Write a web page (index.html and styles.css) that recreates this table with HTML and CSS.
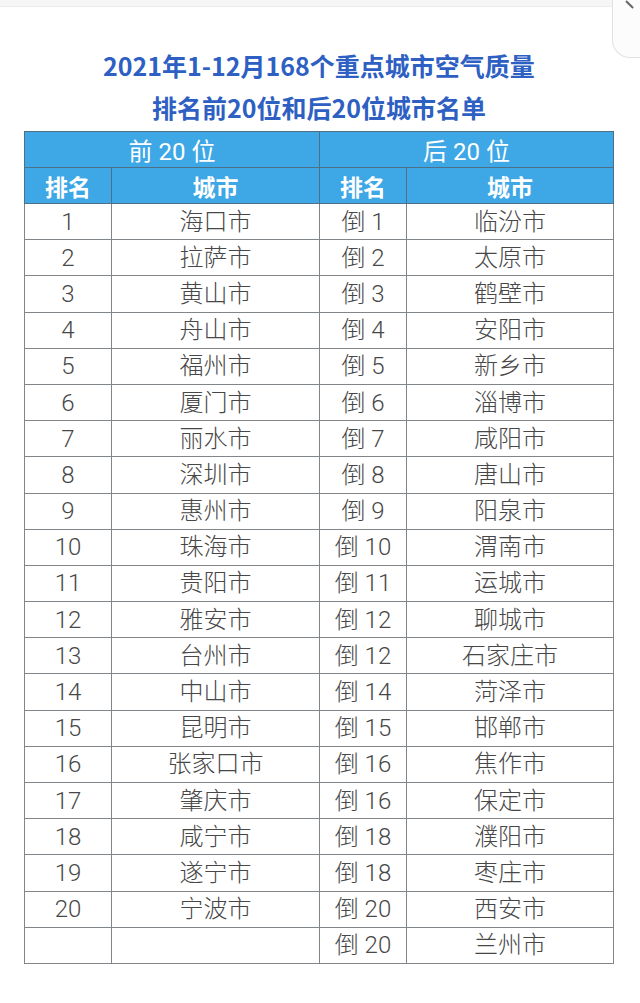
FILE: index.html
```html
<!DOCTYPE html>
<html lang="zh-CN">
<head>
<meta charset="utf-8">
<title>2021年1-12月168个重点城市空气质量排名</title>
<link rel="stylesheet" href="styles.css">
</head>
<body>
<div class="topbar"></div>
<div class="corner"><span class="corner-mark"></span></div>
<main class="page">
  <h1 class="title">
    <span class="line">2021年1-12月168个重点城市空气质量</span>
    <span class="line">排名前20位和后20位城市名单</span>
  </h1>
  <table class="rank">
    <colgroup>
      <col class="c-rank"><col class="c-city"><col class="c-rank"><col class="c-city2">
    </colgroup>
    <thead>
      <tr class="h1"><th colspan="2">前 20 位</th><th colspan="2">后 20 位</th></tr>
      <tr class="h2"><th>排名</th><th>城市</th><th>排名</th><th>城市</th></tr>
    </thead>
    <tbody>
      <tr><td>1</td><td>海口市</td><td>倒 1</td><td>临汾市</td></tr>
      <tr><td>2</td><td>拉萨市</td><td>倒 2</td><td>太原市</td></tr>
      <tr><td>3</td><td>黄山市</td><td>倒 3</td><td>鹤壁市</td></tr>
      <tr><td>4</td><td>舟山市</td><td>倒 4</td><td>安阳市</td></tr>
      <tr><td>5</td><td>福州市</td><td>倒 5</td><td>新乡市</td></tr>
      <tr><td>6</td><td>厦门市</td><td>倒 6</td><td>淄博市</td></tr>
      <tr><td>7</td><td>丽水市</td><td>倒 7</td><td>咸阳市</td></tr>
      <tr><td>8</td><td>深圳市</td><td>倒 8</td><td>唐山市</td></tr>
      <tr><td>9</td><td>惠州市</td><td>倒 9</td><td>阳泉市</td></tr>
      <tr><td>10</td><td>珠海市</td><td>倒 10</td><td>渭南市</td></tr>
      <tr><td>11</td><td>贵阳市</td><td>倒 11</td><td>运城市</td></tr>
      <tr><td>12</td><td>雅安市</td><td>倒 12</td><td>聊城市</td></tr>
      <tr><td>13</td><td>台州市</td><td>倒 12</td><td>石家庄市</td></tr>
      <tr><td>14</td><td>中山市</td><td>倒 14</td><td>菏泽市</td></tr>
      <tr><td>15</td><td>昆明市</td><td>倒 15</td><td>邯郸市</td></tr>
      <tr><td>16</td><td>张家口市</td><td>倒 16</td><td>焦作市</td></tr>
      <tr><td>17</td><td>肇庆市</td><td>倒 16</td><td>保定市</td></tr>
      <tr><td>18</td><td>咸宁市</td><td>倒 18</td><td>濮阳市</td></tr>
      <tr><td>19</td><td>遂宁市</td><td>倒 18</td><td>枣庄市</td></tr>
      <tr><td>20</td><td>宁波市</td><td>倒 20</td><td>西安市</td></tr>
      <tr><td></td><td></td><td>倒 20</td><td>兰州市</td></tr>
    </tbody>
  </table>
</main>
</body>
</html>
```

FILE: styles.css
```css
html, body {
  margin: 0;
  padding: 0;
  background: #ffffff;
}
body {
  width: 640px;
  height: 1003px;
  overflow: hidden;
  position: relative;
  font-family: "Noto Sans CJK SC", "Noto Sans", sans-serif;
}
.topbar {
  height: 6px;
  background: #f6f6f6;
  border-bottom: 1px solid #ededed;
}
.corner {
  position: absolute;
  top: 0;
  right: 0;
  width: 27px;
  height: 57px;
  border-left: 1px solid #e2e2e2;
  border-bottom: 1px solid #e2e2e2;
  border-bottom-left-radius: 18px;
  background: #fcfcfc;
  overflow: hidden;
}
.corner-mark {
  position: absolute;
  top: 0;
  left: 13px;
  width: 10px;
  height: 2px;
  background: #666;
  transform: rotate(45deg);
  transform-origin: left center;
}
.page {
  padding: 37px 0 0 24px;
}
.title {
  margin: 0;
  width: 590px;
  display: flex;
  flex-direction: column;
  align-items: center;
  color: #2e5fc3;
  font-size: 25px;
  font-weight: 700;
  line-height: 42px;
}
.line {
  display: block;
}
.rank {
  margin-top: 3px;
  border-collapse: collapse;
  width: 590px;
  table-layout: fixed;
  border: 1.5px solid #7e8a94;
}
.c-rank { width: 87px; }
.c-city { width: 208px; }
.c-city2 { width: 207px; }
.rank th, .rank td {
  border: 1px solid #7f8589;
  text-align: center;
  padding: 0;
}
.rank th {
  background: #3ea7e6;
  color: #ffffff;
  height: 35px;
  border-color: #4f6f86;
}
.h1 th {
  font-size: 24px;
  font-weight: 400;
  font-family: Roboto, "Noto Sans CJK SC", sans-serif;
}
.h2 th {
  font-size: 23px;
  font-weight: 700;
}
.rank td {
  height: 35.2px;
  font-family: Roboto, "Noto Sans CJK SC", sans-serif;
  font-size: 24px;
  font-weight: 300;
  color: #474747;
  line-height: 1;
}
```
